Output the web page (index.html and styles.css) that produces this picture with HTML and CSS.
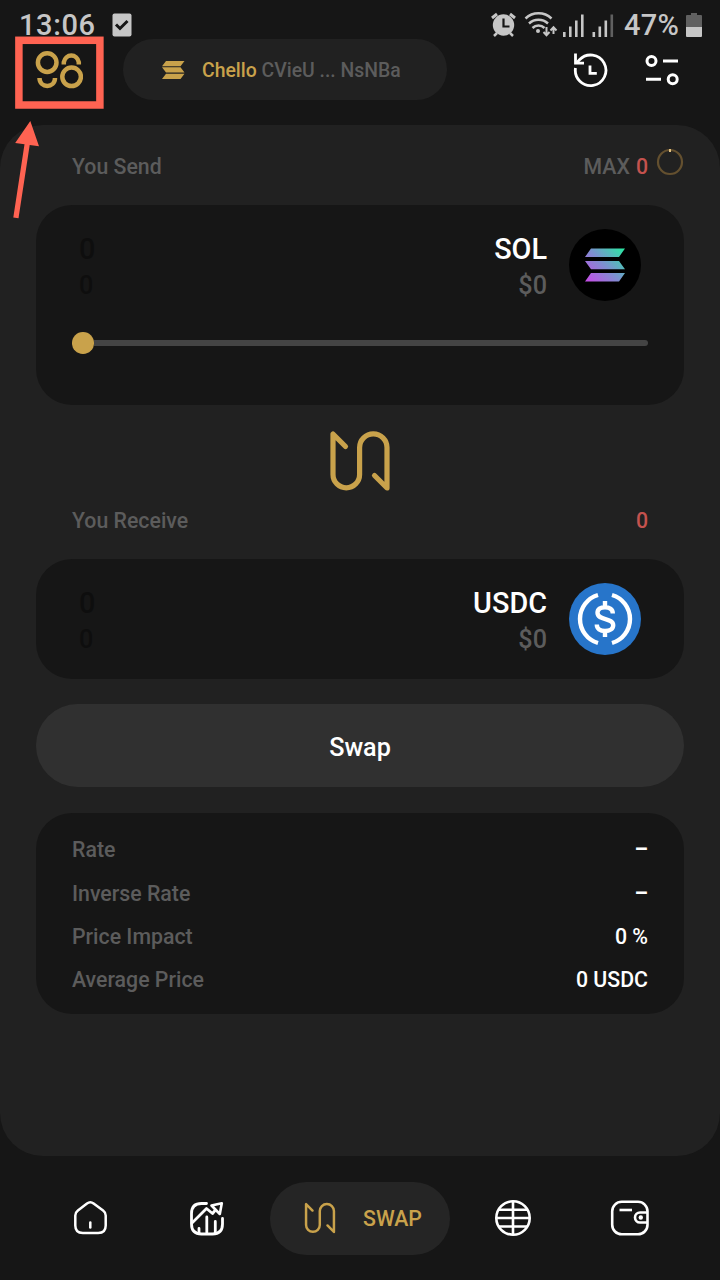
FILE: index.html
```
<!DOCTYPE html>
<html lang="en">
<head>
    <meta charset="UTF-8">
    <meta name="viewport" content="width=device-width, initial-scale=1.0">
    <title>Swap</title>
    <link rel="stylesheet" href="styles.css">
</head>
<body>
    <div class="status-bar">
        <span class="time">13:06</span>
        <svg class="check-icon" width="20" height="24" viewBox="0 0 20 24">
            <rect x="0.5" y="0.5" width="19" height="23" rx="2" fill="#c6c6c6"/>
            <path d="M4 11.500l4 4 7.500-7.500" fill="none" stroke="#161616" stroke-width="3"/>
        </svg>
        <svg class="status-icons" width="130" height="28" viewBox="490 10 130 28">
            <g fill="none" stroke="#c6c6c6">
                <path d="M492 17l5-4M510 13l5 4" stroke-width="3"/>
                <path d="M497 32l-3 3M510 32l3 3" stroke-width="2.500"/>
            </g>
            <circle cx="503.500" cy="24" r="10.700" fill="#c6c6c6"/>
            <path d="M503.500 17.500v8h6" fill="none" stroke="#161616" stroke-width="2.200"/>
            <g fill="none" stroke="#c6c6c6" stroke-width="2.500">
                <path d="M525.500 17.500a19 19 0 0 1 26 0M529 22.500a14 14 0 0 1 19 0M532.500 27a8.500 8.500 0 0 1 12 0"/>
                <path d="M546.500 26v8M543.500 31l3 3.200 3-3.200M553.500 33v-7M550.500 29.500l3-3.200 3 3.200" stroke-width="2"/>
            </g>
            <circle cx="538" cy="30" r="2" fill="#c6c6c6"/>
            <path d="M563 31h2.600v5H563zM569 25.500h2.600V36H569zM575 19.500h2.600V36H575zM581 13.500h2.600V36H581zM592.500 31h2.600v5h-2.600zM598.500 25.500h2.600V36h-2.600zM604.500 19.500h2.600V36h-2.600z" fill="#c6c6c6"/>
            <path d="M610.500 13.500h2.600V36h-2.600z" fill="#606060"/>
        </svg>
        <span class="percent">47%</span>
        <svg class="battery-icon" width="16" height="24" viewBox="0 0 16 24">
            <path d="M5 0h6v2h4q1 0 1 1v11H0V3q0-1 1-1h4z" fill="#606060"/>
            <path d="M0 14h16v9q0 1-1 1H1q-1 0-1-1z" fill="#c6c6c6"/>
        </svg>
    </div>

    <div class="header">
        <svg class="logo" width="48" height="40" viewBox="35 50 48 40" fill="none" stroke="#c9a24b" stroke-width="4.500">
            <circle cx="47.200" cy="62.600" r="9.300"/>
            <circle cx="71.600" cy="76.800" r="9.300"/>
            <path d="M63.800 64.500v-2.300a7.700 8.500 0 0 1 15 0v2.300"/>
            <path d="M39.500 78c0 10.500 15.500 10.500 15.500 0"/>
        </svg>
        <div class="wallet">
            <svg width="23" height="18" viewBox="0 0 23 18" fill="#c9a24b">
                <path d="M4 0h18.500l-4 5.300H0zM0 6.300h18.500l4 5.300H4zM4 12.700h18.500l-4 5.300H0z"/>
            </svg>
            <span class="wallet-text"><span class="wallet-name">Chello</span> CVieU ... NsNBa</span>
        </div>
        <svg class="history-icon" width="36" height="36" viewBox="572 51.500 36 36" fill="none" stroke="#fff" stroke-width="2.800">
            <path d="M575.500 67.500a15.300 15.300 0 1 0 4-8.200l-3 3.200"/>
            <path d="M575.500 53v9.700h8.500"/>
            <path d="M590 65v7.800h6.800"/>
        </svg>
        <svg class="settings-icon" width="34" height="32" viewBox="645 53.500 34 32" fill="none" stroke="#fff" stroke-width="3">
            <circle cx="651.500" cy="60.500" r="4.500"/>
            <circle cx="672.700" cy="78.700" r="4.500"/>
            <path d="M663 60.500h15M646 78.700h15"/>
        </svg>
    </div>

    <div class="panel">
        <div class="label-row">
            <span>You Send</span>
            <span class="max">MAX <span class="red">0</span>
                <svg class="ring" width="28" height="28" viewBox="0 0 28 28" fill="none">
                    <circle cx="14" cy="14" r="12" stroke="#64502f" stroke-width="2.200"/>
                    <path d="M14 1v3" stroke="#e0c080" stroke-width="2"/>
                </svg>
            </span>
        </div>

        <div class="card send-card">
            <div class="token-row">
                <div class="amounts">
                    <div class="amount">0</div>
                    <div class="amount-usd">0</div>
                </div>
                <div class="token">
                    <div class="symbol">SOL</div>
                    <div class="value">$0</div>
                </div>
                <svg class="token-icon" width="72" height="72" viewBox="0 0 72 72">
                    <defs>
                        <linearGradient id="sol" gradientUnits="userSpaceOnUse" x1="18" y1="52" x2="52" y2="18">
                            <stop offset="0" stop-color="#c44ee6"/>
                            <stop offset="0.500" stop-color="#7c91d0"/>
                            <stop offset="1" stop-color="#2ce5a4"/>
                        </linearGradient>
                    </defs>
                    <circle cx="36" cy="36" r="36" fill="#000"/>
                    <path d="M22 19.500h34l-6 8.500H16zM16 32h34l6 8.300H22zM22 44h34l-6 8.500H16z" fill="url(#sol)"/>
                </svg>
            </div>
            <div class="slider"><div class="thumb"></div></div>
        </div>

        <div class="switch">
            <svg width="64" height="62" viewBox="0 0 64 62" fill="none" stroke="#c9a24b" stroke-width="5.200" stroke-linecap="round" stroke-linejoin="round">
                <path d="M17.500 16.500L5 4v40.500a13.300 13.300 0 0 0 26.600 0v-27a13.700 13.700 0 0 1 27.400 0V58L46.500 45.500"/>
            </svg>
        </div>

        <div class="label-row receive-row">
            <span>You Receive</span>
            <span class="red">0</span>
        </div>

        <div class="card receive-card">
            <div class="token-row">
                <div class="amounts">
                    <div class="amount">0</div>
                    <div class="amount-usd">0</div>
                </div>
                <div class="token">
                    <div class="symbol">USDC</div>
                    <div class="value">$0</div>
                </div>
                <svg class="token-icon" width="72" height="72" viewBox="0 0 72 72">
                    <circle cx="36" cy="36" r="36" fill="#2775ca"/>
                    <g fill="none" stroke="#fff" stroke-width="4.400">
                        <path d="M29 12a25 25 0 0 0 0 48M43 12a25 25 0 0 1 0 48"/>
                        <path d="M43.800 30.500c0-4-3.300-6.300-7.800-6.300s-7.500 2-7.500 5.600c0 8.200 15.700 4.400 15.700 12.400 0 3.800-3.500 5.800-8.200 5.800s-8.200-2.200-8.200-6.500M36 18v6M36 48v6"/>
                    </g>
                </svg>
            </div>
        </div>

        <button class="swap-button">Swap</button>

        <div class="card info-card">
            <div class="info-row"><span>Rate</span><span class="info-value dash">–</span></div>
            <div class="info-row"><span>Inverse Rate</span><span class="info-value dash">–</span></div>
            <div class="info-row"><span>Price Impact</span><span class="info-value">0 %</span></div>
            <div class="info-row"><span>Average Price</span><span class="info-value">0 USDC</span></div>
        </div>
    </div>

    <div class="nav">
        <div class="nav-item">
            <svg width="40" height="40" viewBox="70 1198 40 40" fill="none" stroke="#fff" stroke-width="2.500" stroke-linecap="round">
                <path d="M87 1203.500q3.300-2.500 6.600 0l9.500 7q2.600 2 2.600 5v10q0 7.500-7.500 7.500H82.800q-7.500 0-7.500-7.500v-10q0-3 2.600-5z"/>
                <path d="M90.300 1222.500v5"/>
            </svg>
        </div>
        <div class="nav-item">
            <svg width="40" height="40" viewBox="187 1198 40 40" fill="none" stroke="#fff" stroke-width="2.800" stroke-linecap="round" stroke-linejoin="round">
                <path d="M206.500 1203.500h-5q-10 0-10 10v10.500q0 10 10 10h11q10 0 10-10V1218.500"/>
                <path d="M192 1223l14.500-14.500 6 5 2.500-3"/>
                <path d="M211.500 1205.500l10.300-2.200-2 10.700z" stroke-width="2.600"/>
                <path d="M199 1228.500v4M206.800 1217v15.500M215.300 1221.500v11"/>
            </svg>
        </div>
        <div class="nav-item active">
            <svg width="34" height="32" viewBox="0 0 64 62" fill="none" stroke="#c9a24b" stroke-width="4.800" stroke-linecap="round" stroke-linejoin="round">
                <path d="M17.500 16.500L5 4v40.500a13.300 13.300 0 0 0 26.600 0v-27a13.700 13.700 0 0 1 27.400 0V58L46.500 45.500"/>
            </svg>
            <span>SWAP</span>
        </div>
        <div class="nav-item">
            <svg width="40" height="40" viewBox="493.600 1197.500 40 40" fill="none" stroke="#fff" stroke-width="2.600">
                <circle cx="513.600" cy="1217.500" r="16.700"/>
                <path d="M513.600 1201v33M497 1217.500h33M499.500 1209.300h28.500M499.500 1226h28.500"/>
            </svg>
        </div>
        <div class="nav-item">
            <svg width="40" height="40" viewBox="610.500 1197.500 40 40" fill="none" stroke="#fff" stroke-width="2.600">
                <rect x="612.700" y="1201.300" width="35.300" height="32.500" rx="9.500"/>
                <path d="M648 1212h-7.500a5 5 0 0 0 0 10h7.500"/>
                <path d="M620 1209.500h12.500"/>
                <circle cx="641.300" cy="1217" r="2.200" fill="#fff" stroke="none"/>
            </svg>
        </div>
    </div>

    <svg class="marker" width="110" height="225" viewBox="0 0 110 225">
        <rect x="18.900" y="40.300" width="81" height="64.700" fill="none" stroke="#ff6352" stroke-width="7.500"/>
        <path d="M30.300 121L15.200 143l9.300 1.300L13.300 217.500l5.200.8L29.700 145l9.300 1.300z" fill="#ff6352"/>
    </svg>
</body>
</html>
```
FILE: styles.css
```
* {
    margin: 0;
    padding: 0;
    box-sizing: border-box;
}

body {
    position: relative;
    width: 720px;
    height: 1280px;
    overflow: hidden;
    display: flex;
    flex-direction: column;
    font-family: Roboto, sans-serif;
    font-size: 21.3px;
    font-weight: 500;
    background-color: #161616;
    color: #5c5c5c;
}

svg {
    display: block;
    flex-shrink: 0;
}

/* status bar */
.status-bar {
    height: 39px;
    padding: 10px 18px 0 19px;
    display: flex;
    align-items: center;
    flex-shrink: 0;
    color: #c6c6c6;
    font-size: 29px;
    line-height: 29px;
}

.time {
    width: 93px;
    padding-top: 2px;
    letter-spacing: 0.6px;
}

.status-icons {
    margin-left: auto;
}

.percent {
    width: 62px;
    margin-left: 4px;
    padding-top: 2px;
    letter-spacing: 0.3px;
}

/* header */
.header {
    height: 86px;
    padding: 0 41px 25px 35px;
    display: flex;
    align-items: center;
    flex-shrink: 0;
}

.wallet {
    width: 324px;
    height: 61px;
    margin-left: 40px;
    padding-left: 39px;
    display: flex;
    align-items: center;
    gap: 17px;
    border-radius: 31px;
    background-color: #212121;
    font-size: 19.4px;
}

.wallet-text {
    padding-top: 2px;
    white-space: nowrap;
}

.wallet-name {
    color: #c9a24b;
}

.history-icon {
    margin-left: auto;
}

.settings-icon {
    margin-left: 37px;
}

/* main panel */
.panel {
    height: 1031px;
    padding: 0 36px;
    border-radius: 43px;
    background-color: #212121;
    flex-shrink: 0;
}

.label-row {
    height: 80px;
    padding: 2px 36px 0;
    display: flex;
    align-items: center;
    justify-content: space-between;
}

.max {
    display: flex;
    align-items: center;
    gap: 6px;
    margin-right: -36px;
}

.ring {
    margin: -9px 0 0 2px;
}

.red {
    color: #c4524e;
}

.card {
    border-radius: 36px;
    background-color: #161616;
}

.send-card {
    height: 200px;
    padding: 24px 36px;
}

.receive-card {
    height: 120px;
    padding: 24px 36px;
}

.token-row {
    height: 72px;
    padding: 0 7px;
    display: flex;
}

.amounts {
    flex: 1;
    color: #0e0e0e;
}

.token {
    margin-right: 22px;
    text-align: right;
}

.amount,
.symbol {
    height: 39px;
    font-size: 28.8px;
    line-height: 40px;
}

.amount-usd,
.value {
    font-size: 25.2px;
    line-height: 35px;
}

.symbol {
    color: #fff;
}

.slider {
    height: 22px;
    margin-top: 31px;
    display: flex;
    align-items: center;
}

.slider::after {
    content: "";
    flex: 1;
    height: 6px;
    border-radius: 0 3px 3px 0;
    background-color: #444;
}

.thumb {
    width: 21.6px;
    height: 21.6px;
    border-radius: 50%;
    background-color: #c9a24b;
}

.switch {
    height: 92px;
    padding-top: 25px;
    display: flex;
    justify-content: center;
}

.receive-row {
    height: 62px;
    padding: 0 36px 16px;
}

.swap-button {
    display: block;
    width: 100%;
    height: 83px;
    margin: 25px 0 26px;
    padding-top: 3px;
    border: none;
    border-radius: 42px;
    background-color: #303030;
    color: #fff;
    font-family: inherit;
    font-size: 25.2px;
    font-weight: 500;
}

.info-card {
    height: 201px;
    padding: 15px 36px;
}

.info-row {
    height: 43.4px;
    display: flex;
    align-items: center;
    justify-content: space-between;
}

.info-value {
    color: #fff;
}

.dash {
    font-weight: 700;
}

/* bottom navigation */
.nav {
    height: 124px;
    padding: 0 70px;
    display: flex;
    align-items: center;
    justify-content: space-between;
}

.nav-item.active {
    width: 180px;
    height: 73px;
    margin: 0 -34px;
    padding-left: 33px;
    display: flex;
    align-items: center;
    gap: 26px;
    border-radius: 37px;
    background-color: #252525;
    color: #c9a24b;
}

/* highlight drawn over the logo */
.marker {
    position: absolute;
    top: 0;
    left: 0;
}
```
